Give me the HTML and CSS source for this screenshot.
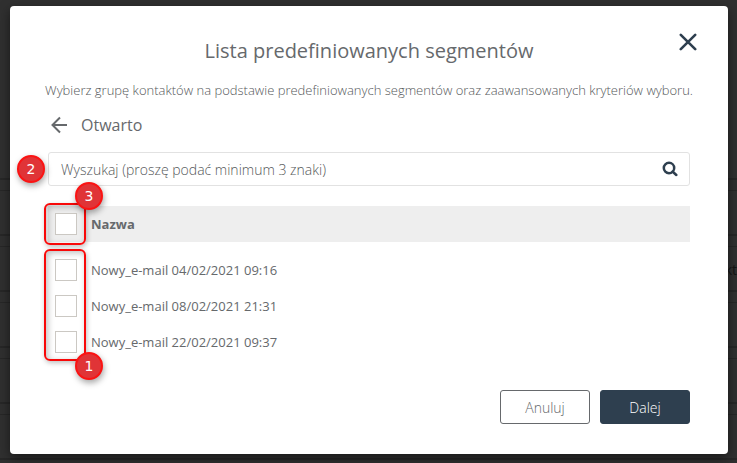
FILE: index.html
```html
<!DOCTYPE html>
<html lang="pl">

<head>
    <meta charset="UTF-8">
    <meta name="viewport" content="width=device-width, initial-scale=1.0">
    <title>Lista predefiniowanych segmentów</title>
    <link rel="stylesheet" href="styles.css">
</head>

<body>
    <div class="page-lines"></div>
    <div class="page-text">kt</div>

    <div class="modal" role="dialog" aria-labelledby="modal-title">
        <button class="close" type="button" aria-label="Zamknij">
            <svg width="18" height="18" viewBox="0 0 18 18">
                <path d="M1.800 1.800 L16.200 16.200 M16.200 1.800 L1.800 16.200" fill="none" stroke="#2e3f4f" stroke-width="2.600" stroke-linecap="round" />
            </svg>
        </button>

        <h1 id="modal-title">Lista predefiniowanych segmentów</h1>
        <p class="intro">Wybierz grupę kontaktów na podstawie predefiniowanych segmentów oraz zaawansowanych kryteriów wyboru.</p>

        <div class="content">
            <a class="back" href="#">
                <svg width="18" height="18" viewBox="0 0 18 18">
                    <path d="M16 9 H2 M9 1.500 L1.500 9 L9 16.500" fill="none" stroke="#66696c" stroke-width="2" />
                </svg>
                Otwarto
            </a>

            <form class="search">
                <input type="text" name="search" aria-label="Wyszukaj" placeholder="Wyszukaj (proszę podać minimum 3 znaki)">
                <button type="submit" aria-label="Szukaj">
                    <svg width="16" height="16" viewBox="0 0 16 16">
                        <circle cx="7" cy="7" r="5.200" fill="none" stroke="#2e3f4f" stroke-width="2.500" />
                        <path d="M10.500 10.500 L14.300 14" stroke="#2e3f4f" stroke-width="2.500" stroke-linecap="round" />
                    </svg>
                </button>
                <span class="badge badge-search">2</span>
            </form>

            <div class="segments">
                <table>
                    <thead>
                        <tr>
                            <th class="check"><input type="checkbox" id="all" aria-label="Zaznacz wszystkie"></th>
                            <th><label for="all">Nazwa</label></th>
                        </tr>
                    </thead>
                    <tbody>
                        <tr>
                            <td class="check"><input type="checkbox" id="segment-1"></td>
                            <td><label for="segment-1">Nowy_e-mail 04/02/2021 09:16</label></td>
                        </tr>
                        <tr>
                            <td class="check"><input type="checkbox" id="segment-2"></td>
                            <td><label for="segment-2">Nowy_e-mail 08/02/2021 21:31</label></td>
                        </tr>
                        <tr>
                            <td class="check"><input type="checkbox" id="segment-3"></td>
                            <td><label for="segment-3">Nowy_e-mail 22/02/2021 09:37</label></td>
                        </tr>
                    </tbody>
                </table>
                <div class="mark mark-all"><span class="badge badge-all">3</span></div>
                <div class="mark mark-rows"><span class="badge badge-rows">1</span></div>
            </div>

            <div class="actions">
                <button class="btn" type="button">Anuluj</button>
                <button class="btn btn-primary" type="button">Dalej</button>
            </div>
        </div>
    </div>
</body>

</html>
```

FILE: styles.css
```css
* {
    box-sizing: border-box;
}

body {
    margin: 0;
    padding: 6px 9px 9px 10px;
    background-color: #303030;
    color: #66696c;
    font-family: "Open Sans", sans-serif;
    font-size: 14px;
}

/* dimmed page behind the modal */
.page-lines {
    position: absolute;
    top: 178px;
    right: 0;
    bottom: 0;
    left: 0;
    background: repeating-linear-gradient(#272727 0 2px, #303030 2px 12px, #272727 12px 13px, #303030 13px 56px);
}

.page-text {
    position: absolute;
    top: 260px;
    right: 0;
    font-size: 14px;
    line-height: 20px;
    color: #151515;
}

.modal {
    position: relative;
    padding: 30px 34px;
    background-color: white;
    border-radius: 4px;
    box-shadow: 0 4px 12px rgba(0, 0, 0, 0.5);
}

h1 {
    margin: 0;
    font-size: 20px;
    font-weight: 400;
    line-height: 30px;
    text-align: center;
}

.intro {
    margin: 14px 0 0;
    font-size: 13px;
    font-weight: 300;
    line-height: 20px;
    text-align: center;
    color: #55585a;
}

button {
    font-family: inherit;
    cursor: pointer;
}

.close {
    position: absolute;
    top: 27px;
    right: 31px;
    display: flex;
    padding: 0;
    border: 0;
    background: none;
}

.content {
    padding: 0 4px;
}

.back {
    display: flex;
    align-items: center;
    gap: 12px;
    margin: 13px 0 15px 3px;
    font-size: 16px;
    line-height: 24px;
    color: inherit;
    text-decoration: none;
}

.search {
    position: relative;
    display: flex;
    align-items: center;
    height: 34px;
    padding: 0 11px 0 12px;
    border: 1px solid #e2e2e2;
    border-radius: 3px;
}

.search input {
    flex: 1;
    padding: 0;
    border: 0;
    outline: 0;
    font-family: inherit;
    font-size: 14px;
    font-weight: 300;
    color: #55585a;
}

.search input::placeholder {
    color: #55585a;
    opacity: 1;
}

.search button {
    display: flex;
    padding: 0;
    border: 0;
    background: none;
}

.segments {
    position: relative;
    margin-top: 20px;
}

table {
    width: 100%;
    border-collapse: collapse;
    font-size: 13px;
}

th,
td {
    height: 36px;
    padding: 0;
    text-align: left;
}

thead {
    background-color: #eee;
}

/* gap between the heading and the rows */
tbody::before {
    content: "";
    display: block;
    height: 10px;
}

.check {
    width: 43px;
    padding-left: 7px;
}

.check input {
    appearance: none;
    display: block;
    width: 22px;
    height: 22px;
    margin: 0;
    border: 1px solid #cbc8c3;
    background-color: white;
}

.mark {
    position: absolute;
    left: -4px;
    width: 42px;
    border: 2px solid #f80808;
    border-radius: 6px;
    box-shadow: 1px 2px 5px rgba(0, 0, 0, 0.25), inset 2px 2px 6px rgba(0, 0, 0, 0.25);
    pointer-events: none;
}

.mark-all {
    top: -3px;
    height: 42px;
}

.mark-rows {
    top: 43px;
    bottom: -1px;
}

.badge {
    position: absolute;
    width: 28px;
    height: 28px;
    border: 2px solid #fb1313;
    border-radius: 50%;
    background-color: #e03437;
    box-shadow: 1px 3px 6px rgba(0, 0, 0, 0.35);
    font-family: "DejaVu Sans", sans-serif;
    font-size: 14px;
    line-height: 24px;
    text-align: center;
    color: white;
}

.badge-search {
    top: 2px;
    left: -32px;
}

.badge-all {
    top: -23px;
    right: -19px;
}

.badge-rows {
    right: -19px;
    bottom: -21px;
}

.actions {
    display: flex;
    justify-content: flex-end;
    gap: 10px;
    margin-top: 30px;
}

.btn {
    width: 90px;
    height: 34px;
    padding: 0;
    border: 1px solid #66696c;
    border-radius: 3px;
    background-color: white;
    font-size: 14px;
    font-weight: 300;
    color: #66696c;
}

.btn-primary {
    border-color: #2e3f4f;
    background-color: #2e3f4f;
    color: white;
}
```
